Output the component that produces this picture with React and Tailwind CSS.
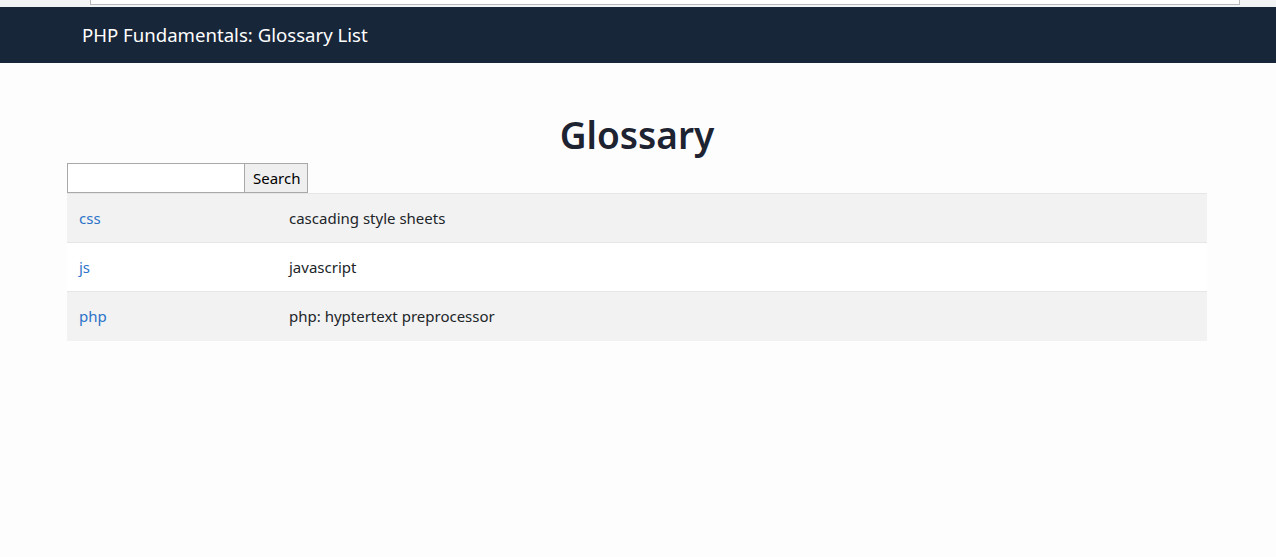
import React, { useState } from 'react'

const terms = [
  { term: 'css', def: 'cascading style sheets' },
  { term: 'js', def: 'javascript' },
  { term: 'php', def: 'php: hyptertext preprocessor' },
]

export default function App(){
  const [q, setQ] = useState('')

  return (
    <div className="min-h-[557px] bg-[#fdfdfd] text-[#212529]" style={{ fontFamily: '"Noto Sans", "Open Sans", sans-serif' }}>
      {/* leftover browser chrome strip */}
      <div className="h-[7px] bg-[#f1f3f4] flex">
        <div className="ml-[90px] w-[1150px] h-[5px] bg-white border-b border-x border-[#b8b8b8]"></div>
      </div>

      <nav className="h-[56px] bg-[#18263a] flex items-center px-[82px]">
        <span className="text-white text-[18.6px]">PHP Fundamentals: Glossary List</span>
      </nav>

      <div className="mx-[67px] w-[1140px]">
        <h1 className="text-center text-[37px] font-semibold text-[#1d2330] mt-[44px] leading-[56px]">Glossary</h1>

        <form className="flex" onSubmit={e=>e.preventDefault()}>
          <input
            value={q}
            onChange={e=>setQ(e.target.value)}
            className="w-[178px] h-[30px] border border-[#a9a9a9] bg-white outline-none px-1"
          />
          <button className="h-[30px] pl-[8px] pr-[7px] border border-[#a9a9a9] border-l-0 bg-[#efefef] text-[15px] text-black">Search</button>
        </form>

        <table className="w-full text-[15px]">
          <tbody>
            {terms.map((t, i) => (
              <tr key={t.term} className={(i % 2 === 0 ? 'bg-[#f2f2f2]' : 'bg-white') + ' border-t border-[#e6e6e6] h-[49px]'}>
                <td className="w-[222px] pl-[12px] text-[#2b73c9]"><a href="#">{t.term}</a></td>
                <td>{t.def}</td>
              </tr>
            ))}
          </tbody>
        </table>
      </div>
    </div>
  )
}
